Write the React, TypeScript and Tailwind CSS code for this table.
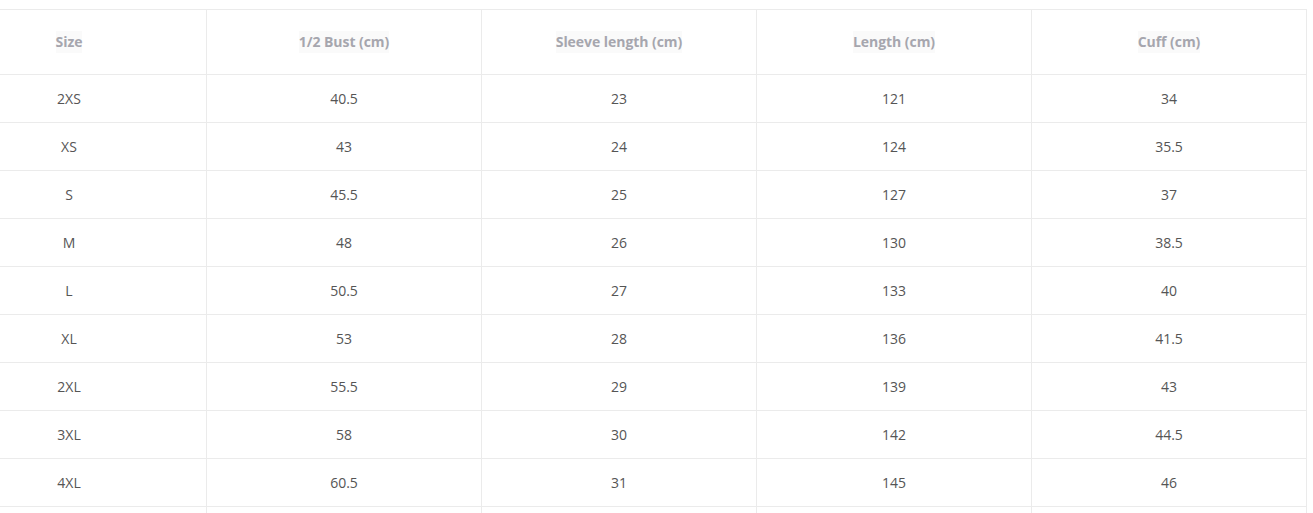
import React from "react";

const headers = ["Size", "1/2 Bust (cm)", "Sleeve length (cm)", "Length (cm)", "Cuff (cm)"];
const rows: string[][] = [
  ["2XS", "40.5", "23", "121", "34"],
  ["XS", "43", "24", "124", "35.5"],
  ["S", "45.5", "25", "127", "37"],
  ["M", "48", "26", "130", "38.5"],
  ["L", "50.5", "27", "133", "40"],
  ["XL", "53", "28", "136", "41.5"],
  ["2XL", "55.5", "29", "139", "43"],
  ["3XL", "58", "30", "142", "44.5"],
  ["4XL", "60.5", "31", "145", "46"],
  ["", "", "", "", ""],
];

export default function App() {
  return (
    <div
      className="w-[1313px] h-[513px] overflow-hidden bg-white"
      style={{ fontFamily: '"Open Sans", "Noto Sans", sans-serif' }}
    >
      <div className="pt-[9px] ml-[-69px]">
        <div className="grid grid-cols-[274px_274px_274px_274px_274px] gap-px bg-[#ebebeb] border border-[#ebebeb] w-max">
          {headers.map((h) => (
            <div key={h} className="bg-white h-[64px] flex items-center justify-center">
              <span className="text-[14px] font-bold text-[#a6a6ae] bg-[#fafafa] tracking-[-0.05px] pb-[1px]">
                {h}
              </span>
            </div>
          ))}
          {rows.map((r, i) =>
            r.map((c, j) => (
              <div
                key={`${i}-${j}`}
                className="bg-white h-[47px] flex items-center justify-center text-[14px] text-[#555555]"
              >
                {c}
              </div>
            ))
          )}
        </div>
      </div>
    </div>
  );
}
